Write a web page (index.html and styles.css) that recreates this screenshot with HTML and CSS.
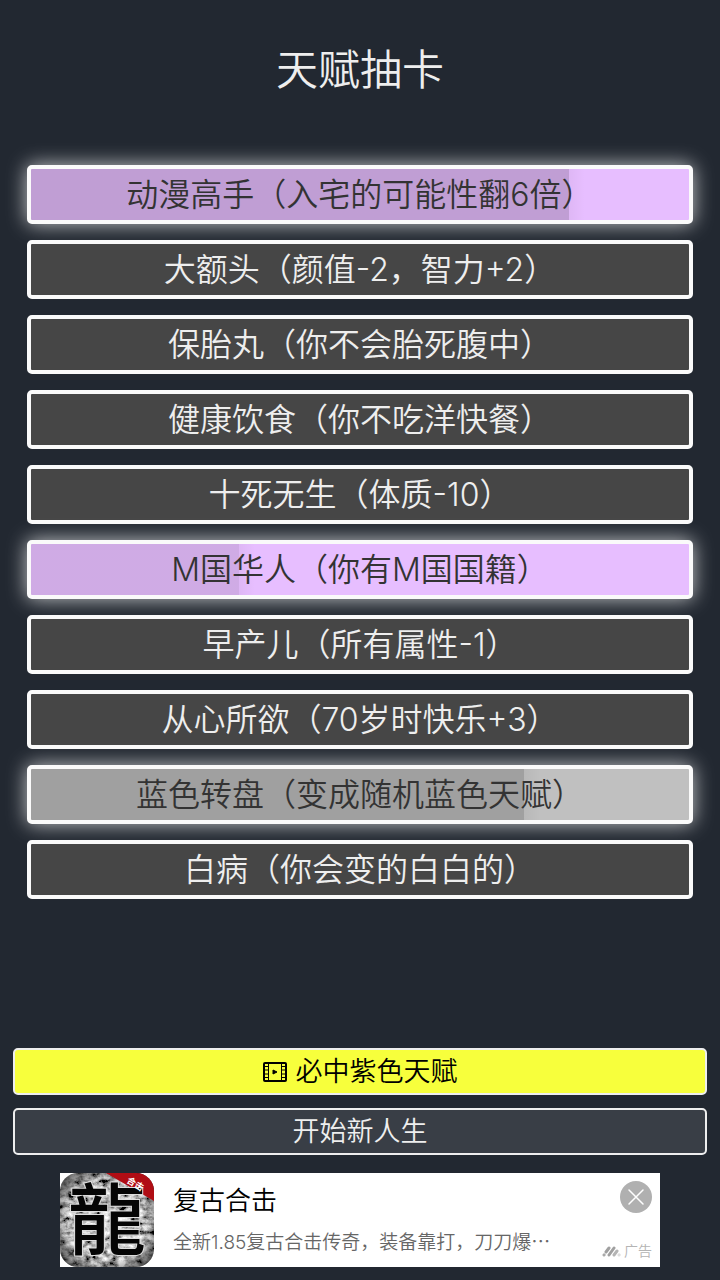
FILE: index.html
```html
<!DOCTYPE html>
<html lang="zh-CN">
<head>
    <meta charset="UTF-8">
    <meta name="viewport" content="width=device-width, initial-scale=1.0">
    <title>天赋抽卡</title>
    <link rel="stylesheet" href="styles.css">
</head>
<body>
    <h1>天赋抽卡</h1>
    <main id="talents">
        <button class="talent purple selected" style="--ripple: 81.7%; --tint: 0.17" aria-pressed="true">动漫高手（入宅的可能性翻6倍）</button>
        <button class="talent" aria-pressed="false">大额头（颜值-2，智力+2）</button>
        <button class="talent" aria-pressed="false">保胎丸（你不会胎死腹中）</button>
        <button class="talent" aria-pressed="false">健康饮食（你不吃洋快餐）</button>
        <button class="talent" aria-pressed="false">十死无生（体质-10）</button>
        <button class="talent purple selected" style="--ripple: 31.6%; --tint: 0.1" aria-pressed="true">M国华人（你有M国国籍）</button>
        <button class="talent" aria-pressed="false">早产儿（所有属性-1）</button>
        <button class="talent" aria-pressed="false">从心所欲（70岁时快乐+3）</button>
        <button class="talent selected" style="--ripple: 75%; --tint: 0.17" aria-pressed="true">蓝色转盘（变成随机蓝色天赋）</button>
        <button class="talent" aria-pressed="false">白病（你会变的白白的）</button>
    </main>
    <footer>
        <button class="action ad-action">
            <svg width="24" height="20" viewBox="0 0 24 20" aria-hidden="true">
                <rect x="1" y="1" width="22" height="18" rx="1" fill="none" stroke="#000" stroke-width="2"/>
                <path d="M5.500 1v18M18.500 1v18" stroke="#000" stroke-width="1"/>
                <path d="M1 4.500h4M1 8h4M1 12h4M1 15.500h4M19 4.500h4M19 8h4M19 12h4M19 15.500h4" stroke="#000" stroke-width="1"/>
                <path d="M10 8l4 2-4 2z" fill="#000" stroke="#000" stroke-linejoin="round"/>
            </svg>
            必中紫色天赋
        </button>
        <button class="action">开始新人生</button>
        <aside class="banner">
            <svg class="app-icon" width="94" height="94" viewBox="0 0 94 94" role="img" aria-label="复古合击">
                <defs>
                    <filter id="stone" x="0" y="0" width="100%" height="100%">
                        <feTurbulence type="fractalNoise" baseFrequency="0.12 0.16" numOctaves="5" seed="8"/>
                        <feColorMatrix values="2 0 0 0 -0.5  2 0 0 0 -0.5  2 0 0 0 -0.5  0 0 0 0 1"/>
                    </filter>
                    <radialGradient id="shade" r="0.7">
                        <stop offset="0.6" stop-color="#000" stop-opacity="0"/>
                        <stop offset="1" stop-color="#000" stop-opacity="0.8"/>
                    </radialGradient>
                    <clipPath id="rounded"><rect width="94" height="94" rx="18"/></clipPath>
                </defs>
                <g clip-path="url(#rounded)">
                    <rect width="94" height="94" filter="url(#stone)"/>
                    <rect width="94" height="94" fill="url(#shade)"/>
                    <path d="M46 0h48v28z" fill="#b00d14"/>
                </g>
                <text class="dragon" x="47" y="76">龍</text>
                <text class="ribbon" transform="translate(66 9) rotate(31)">合击</text>
            </svg>
            <a class="banner-text" href="#">
                <strong>复古合击</strong>
                <span>全新1.85复古合击传奇，装备靠打，刀刀爆⋯</span>
            </a>
            <div class="banner-side">
                <button class="close" aria-label="关闭">
                    <svg width="32" height="32" viewBox="0 0 32 32" aria-hidden="true">
                        <path d="M9 9l14 14M23 9L9 23" stroke="#fff" stroke-width="1.500" stroke-linecap="round"/>
                    </svg>
                </button>
                <small>
                    <svg width="19" height="11" viewBox="0 0 19 11" aria-hidden="true">
                        <g stroke-width="3" stroke-linecap="round">
                            <path d="M2 9l.1-.1" stroke="#aaa"/>
                            <path d="M4 6l3-4M7 9l5-7" stroke="#a0a0a0"/>
                            <path d="M12 9l3-4" stroke="#b4b4b4"/>
                            <path d="M17 9l.1-.1" stroke="#ddd"/>
                        </g>
                    </svg>
                    广告
                </small>
            </div>
        </aside>
    </footer>

    <script>
        document.querySelectorAll('.talent').forEach(button => {
            button.addEventListener('click', () => {
                const selected = button.classList.toggle('selected');
                button.setAttribute('aria-pressed', selected);
            });
        });
    </script>
</body>
</html>
```

FILE: styles.css
```css
* { box-sizing: border-box; }
body { margin: 0; min-height: 100vh; display: flex; flex-direction: column; background-color: #222831; color: #eee; font-family: Inter, "Noto Sans CJK SC", sans-serif; font-weight: 350; }
button { font: inherit; color: inherit; cursor: pointer; }
h1 { margin: 40px 0 65px; font-size: 42px; line-height: 60px; font-weight: 350; text-align: center; }

#talents { display: flex; flex-direction: column; gap: 16px; padding: 0 27px; }
.talent { height: 59px; padding: 0; border: 4px solid #fafafa; border-radius: 5px; background-color: #464646; font-size: 32px; line-height: 48px; }
.selected { color: #333; background-color: silver; background-image: linear-gradient(to right, rgba(0, 0, 0, var(--tint, 0)) var(--ripple, 0%), rgba(0, 0, 0, 0.04) var(--ripple, 0%), transparent calc(var(--ripple, 0%) + 16px)); box-shadow: 0 0 20px rgba(255, 255, 255, 0.75); }
.purple.selected { background-color: #e7beff; }

footer { margin-top: auto; padding: 0 13px 13px; display: flex; flex-direction: column; gap: 13px; }
.action { display: flex; align-items: center; justify-content: center; gap: 9px; height: 47px; padding: 0; border: 2px solid #eee; border-radius: 5px; background-color: #393e46; font-size: 27px; line-height: 40px; }
.ad-action { background-color: #f7ff3c; color: #000; }

.banner { display: flex; width: 100%; max-width: 600px; height: 94px; margin: 5px auto 0; background-color: #fff; color: #000; }
.app-icon { flex: none; }
.dragon { font-family: "Noto Sans CJK TC", sans-serif; font-size: 78px; font-weight: 500; text-anchor: middle; fill: #050505; stroke: #ddd; stroke-width: 2px; paint-order: stroke; }
.ribbon { font-size: 9px; font-weight: 700; fill: #fff; }
.banner-text { flex: 1; min-width: 0; padding: 9px 0 0 19px; color: #000; text-decoration: none; }
.banner-text strong, .banner-text span { display: block; overflow: hidden; white-space: nowrap; text-overflow: ellipsis; }
.banner-text strong { font-size: 26px; line-height: 38px; font-weight: 350; }
.banner-text span { margin-top: 9px; color: #666; font-size: 19px; line-height: 28px; }
.banner-side { display: flex; flex-direction: column; align-items: flex-end; justify-content: space-between; padding: 8px 8px 6px 0; }
.close { display: flex; width: 32px; height: 32px; padding: 0; border: none; border-radius: 50%; background-color: #b0b0b0; }
.banner-side small { display: flex; align-items: center; gap: 3px; color: #b4b4b4; font-size: 14px; line-height: 20px; }
```
